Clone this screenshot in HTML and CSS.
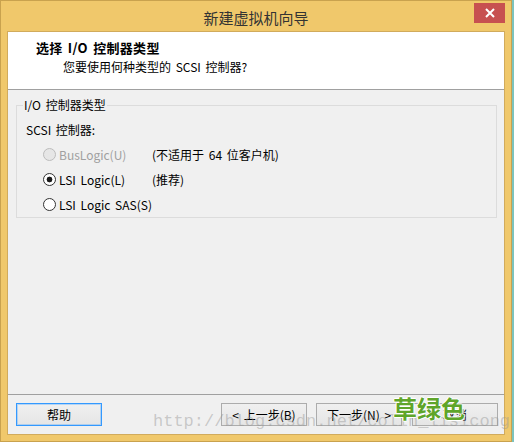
FILE: index.html
```html
<!DOCTYPE html>
<html lang="zh-CN">
<head>
    <meta charset="UTF-8">
    <meta name="viewport" content="width=device-width, initial-scale=1.0">
    <title>新建虚拟机向导</title>
    <link rel="stylesheet" href="styles.css">
</head>
<body>
    <div class="window">
        <div class="titlebar">
            <span></span>
            <span class="title">新建虚拟机向导</span>
            <span class="close">
                <svg width="10" height="10" viewBox="0 0 10 10">
                    <path d="M1 1 L9 9 M9 1 L1 9" stroke="#fff" stroke-width="2" fill="none"/>
                </svg>
            </span>
        </div>

        <div class="content">
            <div class="header">
                <div class="heading">选择 I/O 控制器类型</div>
                <div class="subheading">您要使用何种类型的 SCSI 控制器?</div>
            </div>

            <div class="main">
                <fieldset class="group">
                    <legend>I/O 控制器类型</legend>
                    <div class="group-label">SCSI 控制器:</div>
                    <div class="options">
                        <div class="option disabled"><span class="radio"></span>BusLogic(U)</div>
                        <div class="note">(不适用于 64 位客户机)</div>
                        <div class="option"><span class="radio checked"></span>LSI Logic(L)</div>
                        <div class="note">(推荐)</div>
                        <div class="option"><span class="radio"></span>LSI Logic SAS(S)</div>
                        <div class="note"></div>
                    </div>
                </fieldset>
            </div>

            <div class="footer">
                <button class="btn btn-default">帮助</button>
                <div class="nav">
                    <button class="btn">&lt; 上一步(B)</button>
                    <button class="btn">下一步(N) &gt;</button>
                    <button class="btn btn-cancel">取消</button>
                </div>
            </div>
        </div>

        <!-- overlays on top of the screenshot -->
        <div class="watermark">http://blog.csdn.net/colin_lisicong</div>
        <div class="stamp">草绿色</div>
    </div>
</body>
</html>
```

FILE: styles.css
```css
body {
    margin: 0;
    background: #7cc3bd;
    width: 514px;
    height: 442px;
    overflow: hidden;
}

.window {
    position: relative;
    width: 512px;
    height: 442px;
    box-sizing: border-box;
    border: 1px solid #c9a24e;
    background: #f0c86b;
    padding: 0 6px 6px;
    display: flex;
    flex-direction: column;
    font-family: "Noto Sans CJK SC", "Noto Sans", sans-serif;
    font-size: 12px;
    word-spacing: 2px;
    color: #000;
}

.titlebar {
    height: 30px;
    display: grid;
    grid-template-columns: 1fr auto 1fr;
    align-items: start;
}

.title {
    font-size: 15px;
    line-height: 20px;
    margin-top: 7px;
    color: #333;
}

.close {
    justify-self: end;
    width: 31px;
    height: 20px;
    margin-top: 2px;
    background: #c75050;
    display: flex;
    align-items: center;
    justify-content: center;
}

.content {
    flex: 1;
    border: 1px solid #d1ab5c;
    background: #f0f0f0;
    display: flex;
    flex-direction: column;
}

.header {
    height: 58px;
    box-sizing: border-box;
    background: #fff;
    border-bottom: 1px solid #a0a0a0;
    padding: 8px 0 0 28px;
}

.heading {
    font-size: 13px;
    font-weight: bold;
    line-height: 16px;
    letter-spacing: 0.3px;
}

.subheading {
    margin-top: 3px;
    padding-left: 27px;
    line-height: 16px;
}

.main {
    flex: 1;
    padding: 7px 7px 0 8px;
}

.group {
    margin: 0;
    min-width: 0;
    border: 1px solid #dcdcdc;
    padding: 0 6px 4px;
}

.group legend {
    padding: 0 1px;
    line-height: 16px;
}

.group-label {
    margin: 9px 0 0 3px;
    line-height: 16px;
}

.options {
    display: grid;
    grid-template-columns: 109px auto;
    row-gap: 8px;
    margin: 8px 0 0 20px;
    line-height: 17px;
}

.option {
    display: flex;
    align-items: center;
}

.option.disabled {
    color: #a0a0a0;
}

.radio {
    width: 11px;
    height: 11px;
    border: 1px solid #333;
    border-radius: 50%;
    background: #fff;
    margin-right: 3px;
}

.radio.checked {
    background: radial-gradient(circle, #1a1a1a 0 2.6px, #fff 3.2px);
}

.disabled .radio {
    border-color: #bcbcbc;
    background: #e6e6e6;
}

.footer {
    border-top: 1px solid #a0a0a0;
    padding: 8px 6px 8px 8px;
    display: flex;
    justify-content: space-between;
}

.nav {
    display: flex;
    gap: 9px;
}

.btn {
    width: 86px;
    height: 23px;
    padding: 0;
    border: 1px solid #acacac;
    background: linear-gradient(#f0f0f0, #e5e5e5);
    font-family: "Noto Sans CJK SC", "Noto Sans", sans-serif;
    font-size: 12px;
    word-spacing: 2px;
    color: #000;
}

.btn-default {
    border-color: #3399ff;
    box-shadow: inset 0 0 0 1px rgba(51, 153, 255, 0.3);
}

.btn-cancel {
    margin-left: 1px;
}

.watermark {
    position: absolute;
    left: 152px;
    top: 411px;
    font-family: "Liberation Mono", monospace;
    font-size: 17px;
    line-height: 20px;
    word-spacing: 0;
    color: rgba(150, 150, 150, 0.45);
    white-space: nowrap;
}

.stamp {
    position: absolute;
    left: 392px;
    top: 392px;
    font-family: "Noto Sans CJK SC", sans-serif;
    font-size: 24px;
    font-weight: bold;
    line-height: 30px;
    color: #5fa52a;
    text-shadow: 1px 0 #fff, -1px 0 #fff, 0 1px #fff, 0 -1px #fff;
}
```
